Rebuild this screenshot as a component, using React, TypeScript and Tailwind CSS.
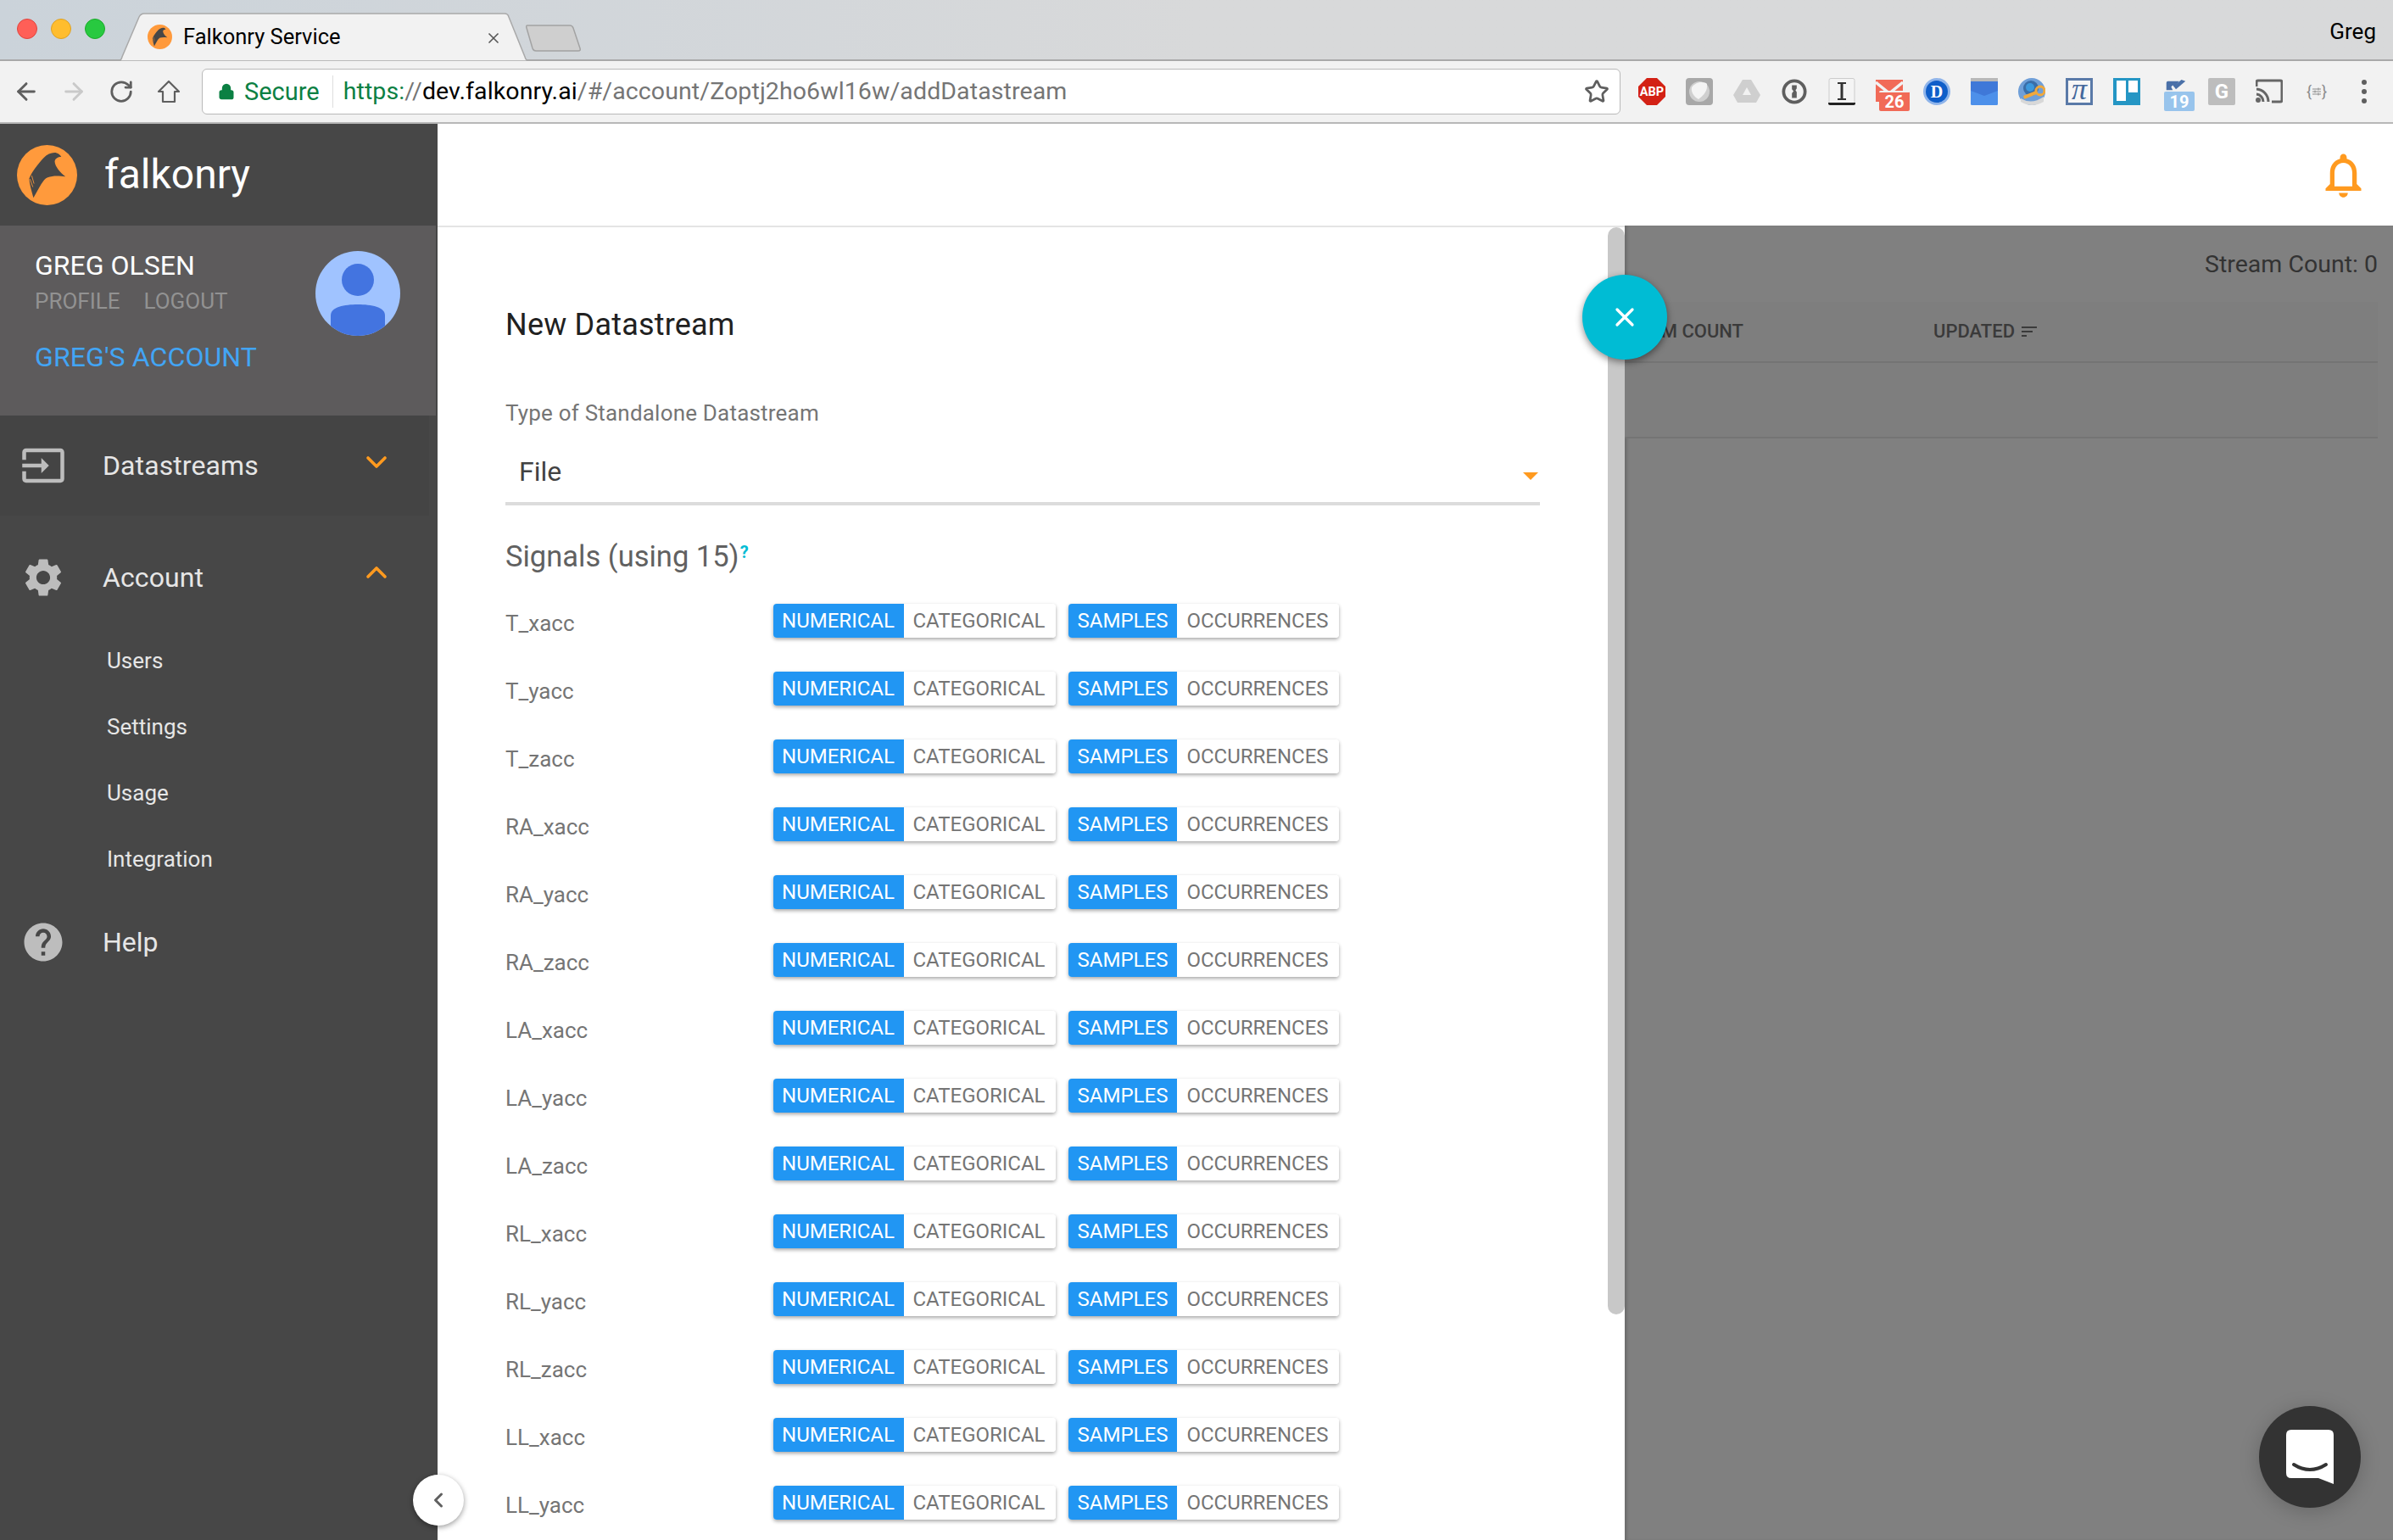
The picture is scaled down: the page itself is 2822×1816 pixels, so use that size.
import React from 'react';
import { ArrowLeft, ArrowRight, RotateCw, Star, X, ChevronDown, ChevronUp, ChevronLeft, Lock } from 'lucide-react';

const signals = [
  'T_xacc', 'T_yacc', 'T_zacc',
  'RA_xacc', 'RA_yacc', 'RA_zacc',
  'LA_xacc', 'LA_yacc', 'LA_zacc',
  'RL_xacc', 'RL_yacc', 'RL_zacc',
  'LL_xacc', 'LL_yacc',
];

const FalconLogo = ({ className }: { className: string }) => (
  <svg viewBox="32 32 212 212" className={className}>
    <circle cx="138" cy="138" r="106" fill="#ff9a3c" />
    <path
      d="M90 218 C84 195 76 172 75 150 C85 125 105 100 125 78 C140 62 160 56 172 60 C180 63 186 68 188 74 C176 74 166 80 165 90 C166 108 185 130 203 143 C185 141 160 138 140 146 C124 152 112 180 90 218 Z"
      fill="#474747"
    />
    <path d="M84 140 L92 168 M78 152 L88 180" stroke="#ff9a3c" strokeWidth="2.5" />
  </svg>
);

const Ext = ({ children }: { children: React.ReactNode }) => (
  <div className="flex h-[56px] w-[56px] shrink-0 items-center justify-center">{children}</div>
);

const numFont = { fontFamily: 'Roboto, sans-serif', fontWeight: 700 };

const ExtensionIcons = () => (
  <div className="ml-[9px] flex items-center">
    <Ext>
      <svg viewBox="0 0 32 32" className="h-[32px] w-[32px]">
        <polygon points="10,0 22,0 32,10 32,22 22,32 10,32 0,22 0,10" fill="#d32115" />
        <text x="16" y="21" textAnchor="middle" fontSize="14.5" fill="#fff" style={numFont}>ABP</text>
      </svg>
    </Ext>
    <Ext>
      <svg viewBox="0 0 32 32" className="h-[32px] w-[32px]">
        <rect width="32" height="32" rx="4" fill="#a8a8a8" />
        <circle cx="16" cy="16" r="12" fill="#cfcfcf" />
        <path d="M7 11 C12 4 22 4 25 7 C26 14 22 20 15 25 C9 22 6 16 7 11 Z" fill="#f4f4f4" />
      </svg>
    </Ext>
    <Ext>
      <svg viewBox="0 0 32 32" className="h-[32px] w-[32px]">
        <polygon points="11,2 21,2 32,20 27,29 5,29 0,20" fill="#cfcfcf" />
        <polygon points="16,11 11,20 21,20" fill="#f2f2f2" />
      </svg>
    </Ext>
    <Ext>
      <svg viewBox="0 0 32 32" className="h-[30px] w-[30px]">
        <circle cx="16" cy="16" r="13.5" fill="none" stroke="#5e5e5e" strokeWidth="4" />
        <path d="M13 8 H19 V12 L17.5 14.5 L19 16.5 V24 H13 V18 L15 15.5 L13 13 Z" fill="#5e5e5e" />
      </svg>
    </Ext>
    <Ext>
      <svg viewBox="0 0 32 32" className="h-[32px] w-[32px]">
        <rect x="1" y="0.5" width="30" height="31" rx="2" fill="#f4f4f4" stroke="#cccccc" />
        <path d="M0 29 H32 V30 Q32 32 30 32 H2 Q0 32 0 30 Z" fill="#222222" />
        <path d="M11 5 H21 V7 H17.5 V24 H21 V26 H11 V24 H14.5 V7 H11 Z" fill="#333333" />
      </svg>
    </Ext>
    <Ext>
      <div className="relative ml-[8px] h-[40px] w-[40px]">
        <svg viewBox="0 0 32 26" className="absolute left-0 top-[6px] h-[26px] w-[32px]">
          <rect width="32" height="26" fill="#f16a57" />
          <path d="M0 3 L16 16 L32 3" fill="none" stroke="#f2f2f2" strokeWidth="3.5" />
        </svg>
        <div className="absolute left-[4px] top-[19px] flex h-[24px] w-[36px] items-center justify-center rounded-[2px] border-t-2 border-[#f2f2f2] bg-[#f16a57] text-[20px] font-bold leading-none text-white">26</div>
      </div>
    </Ext>
    <Ext>
      <svg viewBox="0 0 32 32" className="h-[32px] w-[32px]">
        <circle cx="16" cy="16" r="16" fill="#8fb4ea" />
        <circle cx="16" cy="16" r="13" fill="#0f5ec9" />
        <text x="16" y="23" textAnchor="middle" fontSize="20" fill="#fff" style={{ fontFamily: 'Liberation Serif, serif', fontWeight: 700 }}>D</text>
      </svg>
    </Ext>
    <Ext>
      <svg viewBox="0 0 32 32" className="h-[32px] w-[32px]">
        <rect y="0" width="32" height="5" fill="#b8b8b8" />
        <rect y="4" width="32" height="28" rx="1.5" fill="#4d90ea" />
        <polygon points="0,4 32,4 32,15 16,21 0,15" fill="#3f78d8" />
      </svg>
    </Ext>
    <Ext>
      <svg viewBox="0 0 32 32" className="h-[32px] w-[32px]">
        <circle cx="16" cy="16" r="16" fill="#6f9fd8" />
        <circle cx="15" cy="12" r="9" fill="#3a6ea8" />
        <circle cx="14" cy="11" r="5" fill="#3c98dc" />
        <path d="M3 24 Q16 32 30 22 L30 28 Q16 36 3 28 Z" fill="#d8d8d8" />
        <rect x="6" y="18" width="16" height="4" rx="1" fill="#f0a83c" transform="rotate(-22 14 20)" />
        <circle cx="26" cy="15" r="5" fill="none" stroke="#f0a83c" strokeWidth="3" />
      </svg>
    </Ext>
    <Ext>
      <svg viewBox="0 0 32 32" className="h-[32px] w-[32px]">
        <rect x="1.5" y="1.5" width="29" height="29" fill="#f6f6f6" stroke="#5a7aa8" strokeWidth="3" />
        <text x="16" y="25" textAnchor="middle" fontSize="36" fill="#44689c" style={{ fontFamily: 'Liberation Serif, serif', fontStyle: 'italic' }}>π</text>
      </svg>
    </Ext>
    <Ext>
      <svg viewBox="0 0 32 32" className="h-[32px] w-[32px]">
        <rect width="32" height="32" fill="#2596c4" />
        <rect x="4" y="3" width="11" height="24" fill="#fff" />
        <rect x="18" y="3" width="11" height="14" fill="#fff" />
      </svg>
    </Ext>
    <Ext>
      <div className="relative h-[40px] w-[40px]">
        <svg viewBox="0 0 26 16" className="absolute left-[9px] top-[5px] h-[15px] w-[26px]">
          <path d="M1 5 Q1 3 3 3 H17 L11 10 L9 8 L7 10 L9 14 H1 Z" fill="#4a70a8" />
          <path d="M10 9 L20 1 L25 3 L13 13 Z" fill="#4a70a8" />
        </svg>
        <div className="absolute left-[8px] top-[20px] flex h-[23px] w-[36px] items-center justify-center rounded-[2px] bg-[#98c4ec] text-[20px] font-bold leading-none text-white">19</div>
      </div>
    </Ext>
    <Ext>
      <div className="flex h-[32px] w-[32px] items-center justify-center rounded-[2px] bg-[#bdbdbd] text-[24px] font-bold leading-none text-white">G</div>
    </Ext>
    <Ext>
      <svg viewBox="0 0 32 32" className="h-[32px] w-[32px]">
        <path d="M1 10 V5 Q1 3 3 3 H29 Q31 3 31 5 V26 Q31 28 29 28 H19" fill="none" stroke="#666" strokeWidth="3" />
        <path d="M1 13 A15 15 0 0 1 15 28 M1 19 A9 9 0 0 1 9 28" fill="none" stroke="#666" strokeWidth="3" />
        <circle cx="3" cy="26" r="3" fill="#666" />
      </svg>
    </Ext>
    <Ext>
      <div className="flex items-center text-[18px] leading-none text-[#8c8c8c]">
        {'{'}
        <svg viewBox="0 0 12 12" className="h-[12px] w-[12px]">
          <path d="M1 3 H11 M1 6 H11 M1 9 H11 M8 1.5 V4.5 M4 4.5 V7.5 M8 7.5 V10.5" stroke="#8c8c8c" strokeWidth="1" />
        </svg>
        {'}'}
      </div>
    </Ext>
    <Ext>
      <div className="flex flex-col gap-[5px]">
        <div className="h-[6px] w-[6px] rounded-full bg-[#5f5f5f]" />
        <div className="h-[6px] w-[6px] rounded-full bg-[#5f5f5f]" />
        <div className="h-[6px] w-[6px] rounded-full bg-[#5f5f5f]" />
      </div>
    </Ext>
  </div>
);

const BrowserChrome = () => (
  <div className="shrink-0 font-[Roboto,sans-serif]">
    <div className="flex h-[72px] items-end border-b-2 border-[#a9a9a9] bg-gradient-to-r from-[#cbd3da] via-[#d8d9da] to-[#d8d9da]">
      <div className="flex h-[71px] items-center gap-[16px] pl-[20px] pb-[2px]">
        <div className="h-[24px] w-[24px] rounded-full border border-[#e0443e] bg-[#ff5f57]" />
        <div className="h-[24px] w-[24px] rounded-full border border-[#dea123] bg-[#ffbd2e]" />
        <div className="h-[24px] w-[24px] rounded-full border border-[#1aab29] bg-[#28c940]" />
      </div>
      <div className="relative ml-[15px] mb-[-2px] flex h-[57px] w-[486px] items-center pl-[35px] pr-[20px]">
        <svg viewBox="0 0 486 57" className="absolute inset-0 h-full w-full">
          <path d="M0 57 L0 57 Q4 57 5 52 L25 5 Q27 1 31 1 L456 1 Q460 1 461 5 L480 52 Q481 57 486 57 Z" fill="#f2f2f2" stroke="#a9a9a9" strokeWidth="1.5" />
        </svg>
        <FalconLogo className="relative h-[29px] w-[29px]" />
        <span className="relative ml-[13px] text-[25.5px] leading-none text-black">Falkonry Service</span>
        <X className="absolute left-[433px] top-[20px] h-[20px] w-[20px] text-[#555]" strokeWidth={2} />
      </div>
      <svg viewBox="0 0 66 32" className="mb-[9px] ml-[-5px] h-[32px] w-[66px]">
        <path d="M2 1 H52 Q55 1 56 4 L64 28 Q65 31 62 31 H12 Q9 31 8 28 L1 4 Q0 1 2 1 Z" fill="#cfcfcf" stroke="#a3a3a3" strokeWidth="1.5" />
      </svg>
      <div className="flex-1" />
      <span className="mb-[20px] mr-[20px] text-[26px] leading-none text-black">Greg</span>
    </div>
    <div className="flex h-[74px] items-center border-b-2 border-[#b8b8b8] bg-[#f2f2f2] pl-[3px]">
      <div className="flex h-[56px] w-[56px] items-center justify-center text-[#5f5f5f]">
        <ArrowLeft className="h-[32px] w-[32px]" strokeWidth={2.2} />
      </div>
      <div className="flex h-[56px] w-[56px] items-center justify-center text-[#c9c9c9]">
        <ArrowRight className="h-[32px] w-[32px]" strokeWidth={2.2} />
      </div>
      <div className="flex h-[56px] w-[56px] items-center justify-center text-[#5f5f5f]">
        <RotateCw className="h-[30px] w-[30px]" strokeWidth={2.2} />
      </div>
      <div className="flex h-[56px] w-[56px] items-center justify-center">
        <svg viewBox="0 0 28 28" className="h-[28px] w-[28px]">
          <path d="M14 2 L26 14 H21 V26 H7 V14 H2 Z" fill="none" stroke="#5f5f5f" strokeWidth="2.2" strokeLinejoin="round" />
        </svg>
      </div>
      <div className="ml-[11px] flex h-[54px] w-[1673px] items-center rounded-[6px] border border-[#b9b9b9] bg-white pl-[18px] pr-[12px]">
        <Lock className="h-[20px] w-[20px] text-[#0b8043]" fill="#0b8043" strokeWidth={2.4} />
        <span className="ml-[11px] text-[29px] leading-none text-[#0b8043]">Secure</span>
        <div className="ml-[15px] h-[38px] w-px bg-[#dedede]" />
        <div className="ml-[12px] flex-1 text-[28.5px] leading-none tracking-[0.1px] text-[#757575]">
          <span className="text-[#0b8043]">https:</span>//<span className="text-black">dev.falkonry.ai</span>/#/account/Zoptj2ho6wl16w/addDatastream
        </div>
        <Star className="h-[30px] w-[30px] text-[#5f5f5f]" strokeWidth={2.2} />
      </div>
      <ExtensionIcons />
    </div>
  </div>
);

const Sidebar = () => (
  <div className="flex w-[516px] shrink-0 flex-col bg-[#474747] font-[Roboto,sans-serif]">
    <div className="flex h-[120px] shrink-0 items-center pl-[20px]">
      <FalconLogo className="h-[71px] w-[71px]" />
      <span className="ml-[32px] text-[48px] leading-none text-white">falkonry</span>
    </div>
    <div className="flex h-[224px] w-[514px] shrink-0 justify-between bg-[#5d5b5c] pl-[41px] pr-[42px]">
      <div className="pt-[28px]">
        <div className="text-[32px] leading-[38px] text-white">GREG OLSEN</div>
        <div className="mt-[7px] flex gap-[28px] text-[26px] leading-[32px] text-[#929292]">
          <span>PROFILE</span>
          <span>LOGOUT</span>
        </div>
        <div className="mt-[31px] text-[32px] leading-[38px] tracking-[0.1px] text-[#42a5f5]">GREG'S ACCOUNT</div>
      </div>
      <div className="mt-[30px] h-[100px] w-[100px] overflow-hidden rounded-full bg-[#a0c3ff]">
        <svg viewBox="0 0 100 100" className="h-full w-full">
          <ellipse cx="50" cy="34" rx="19" ry="19" fill="#4374e0" />
          <path d="M18 100 V76 C18 66 34 63 50 63 C66 63 82 66 82 76 V100 Z" fill="#4374e0" />
        </svg>
      </div>
    </div>
    <div className="flex h-[118px] w-[506px] shrink-0 items-center bg-[#444444] pl-[24px]">
      <svg viewBox="0 0 24 24" className="h-[54px] w-[54px]" fill="#bdbdbd">
        <path d="M21 3.01H3c-1.1 0-2 .9-2 2V9h2V4.99h18v14.03H3V15H1v4.01c0 1.1.9 1.98 2 1.98h18c1.1 0 2-.88 2-1.98v-14c0-1.11-.9-2-2-2zM11 16l4-4-4-4v3H1v2h10v3z" />
      </svg>
      <span className="ml-[43px] flex-1 text-[32px] leading-none tracking-[0.1px] text-[#e6e6e6]">Datastreams</span>
      <ChevronDown className="mb-[8px] mr-[42px] h-[40px] w-[40px] text-[#ff9a1f]" strokeWidth={2.2} />
    </div>
    <div className="mt-[38px] flex h-[70px] w-[506px] shrink-0 items-center pl-[24px]">
      <svg viewBox="0 0 24 24" className="h-[54px] w-[54px]" fill="#bdbdbd">
        <path d="M19.14 12.94c.04-.3.06-.61.06-.94 0-.32-.02-.64-.07-.94l2.03-1.58c.18-.14.23-.41.12-.61l-1.92-3.32c-.12-.22-.37-.29-.59-.22l-2.39.96c-.5-.38-1.03-.7-1.62-.94l-.36-2.54c-.04-.24-.24-.41-.48-.41h-3.84c-.24 0-.43.17-.47.41l-.36 2.54c-.59.24-1.13.57-1.62.94l-2.39-.96c-.22-.08-.47 0-.59.22L2.74 8.87c-.12.21-.08.47.12.61l2.03 1.58c-.05.3-.09.63-.09.94s.02.64.07.94l-2.03 1.58c-.18.14-.23.41-.12.61l1.92 3.32c.12.22.37.29.59.22l2.39-.96c.5.38 1.03.7 1.62.94l.36 2.54c.05.24.24.41.48.41h3.84c.24 0 .44-.17.47-.41l.36-2.54c.59-.24 1.13-.56 1.62-.94l2.39.96c.22.08.47 0 .59-.22l1.92-3.32c.12-.22.07-.47-.12-.61l-2.01-1.58zM12 15.6c-1.98 0-3.6-1.62-3.6-3.6s1.62-3.6 3.6-3.6 3.6 1.62 3.6 3.6-1.62 3.6-3.6 3.6z" />
      </svg>
      <span className="ml-[43px] flex-1 text-[32px] leading-none tracking-[0.1px] text-[#e6e6e6]">Account</span>
      <ChevronUp className="mb-[12px] mr-[42px] h-[40px] w-[40px] text-[#ff9a1f]" strokeWidth={2.2} />
    </div>
    <div className="mt-[24px] flex flex-col pl-[126px] text-[26px] leading-[78px] text-[#e6e6e6]">
      <div className="h-[78px]">Users</div>
      <div className="h-[78px]">Settings</div>
      <div className="h-[78px]">Usage</div>
      <div className="h-[78px]">Integration</div>
    </div>
    <div className="mt-[24px] flex h-[70px] items-center pl-[24px]">
      <svg viewBox="0 0 24 24" className="h-[54px] w-[54px]" fill="#bdbdbd">
        <path d="M12 2C6.48 2 2 6.48 2 12s4.48 10 10 10 10-4.48 10-10S17.52 2 12 2zm1 17h-2v-2h2v2zm2.07-7.75l-.9.92C13.45 12.9 13 13.5 13 15h-2v-.5c0-1.1.45-2.1 1.17-2.83l1.24-1.26c.37-.36.59-.86.59-1.41 0-1.1-.9-2-2-2s-2 .9-2 2H8c0-2.21 1.79-4 4-4s4 1.79 4 4c0 .88-.36 1.68-.93 2.25z" />
      </svg>
      <span className="ml-[43px] text-[32px] leading-none text-[#e6e6e6]">Help</span>
    </div>
  </div>
);

const SignalRow = ({ name }: { name: string }) => (
  <div className="flex h-[80px] shrink-0 items-start">
    <div className="w-[316px] text-[26px] leading-[46px] text-[#757575]">{name}</div>
    <div className="flex h-[40px] rounded-[4px] text-[24px] leading-[40px] shadow-[0_2px_4px_rgba(0,0,0,0.35)]">
      <div className="w-[154px] rounded-l-[4px] bg-[#2196f3] pr-[1px] text-center text-white">NUMERICAL</div>
      <div className="w-[179px] rounded-r-[4px] bg-white pr-[2px] text-center text-[#757575]">CATEGORICAL</div>
    </div>
    <div className="ml-[15px] flex h-[40px] rounded-[4px] text-[24px] leading-[40px] shadow-[0_2px_4px_rgba(0,0,0,0.35)]">
      <div className="w-[128px] rounded-l-[4px] bg-[#2196f3] text-center text-white">SAMPLES</div>
      <div className="w-[191px] rounded-r-[4px] bg-white pr-[1px] text-center text-[#757575]">OCCURRENCES</div>
    </div>
  </div>
);

const DatastreamForm = () => (
  <div className="flex h-full w-[1400px] shrink-0 overflow-hidden border-t-2 border-[#e4e4e4] bg-white">
    <div className="w-[1380px] shrink-0 pl-[80px] pr-[80px]">
      <div className="mt-[93px] text-[36px] leading-[44px] tracking-[0.2px] text-[#212121]">New Datastream</div>
      <div className="mt-[66px] text-[26px] leading-[32px] tracking-[0.2px] text-[#757575]">Type of Standalone Datastream</div>
      <div className="flex h-[93px] items-center justify-between border-b-4 border-[#dcdcdc] pl-[16px] pr-[2px] pt-[16px]">
        <span className="text-[32px] leading-none text-[#424242]">File</span>
        <div className="mt-[11px] h-0 w-0 border-x-[9px] border-t-[9px] border-x-transparent border-t-[#ff9a1f]" />
      </div>
      <div className="mt-[38px] h-[44px] text-[34.5px] leading-[44px] text-[#616161]">
        Signals (using 15)<sup className="ml-[1px] text-[20px] font-bold leading-none text-[#00bcd4]">?</sup>
      </div>
      <div className="mt-[34px] flex flex-col">
        {signals.map((name) => (
          <SignalRow key={name} name={name} />
        ))}
      </div>
    </div>
    <div className="h-[1282px] w-[20px] shrink-0 rounded-full bg-[#c8c8c8]" />
  </div>
);

const BackgroundPanel = () => (
  <div className="h-full flex-1 bg-[#808080] pr-[18px] text-[#333333] shadow-[inset_4px_0_4px_-2px_rgba(0,0,0,0.2)]">
    <div className="flex h-[90px] items-end justify-end pb-[30px] text-[28.5px] leading-none">Stream Count: 0</div>
    <div className="bg-[#7e7e7e]">
      <div className="flex h-[72px] items-center border-b-2 border-[#747474] text-[22px] font-medium leading-none text-[#3a3a3a]">
        <div className="flex w-[140px] shrink-0 justify-end overflow-hidden whitespace-nowrap">STREAM COUNT</div>
        <div className="ml-[224px] flex items-center">
          UPDATED
          <svg viewBox="0 0 18 12" className="ml-[8px] h-[12px] w-[18px]">
            <path d="M0 1 H18 M0 6 H13 M0 11 H6" stroke="#3a3a3a" strokeWidth="2" />
          </svg>
        </div>
      </div>
      <div className="h-[89px] border-b-2 border-[#747474]" />
    </div>
  </div>
);

export default function App() {
  return (
    <div className="flex h-[1816px] w-[2822px] flex-col overflow-hidden bg-white font-[Roboto,sans-serif]">
      <BrowserChrome />
      <div className="flex min-h-0 flex-1">
        <Sidebar />
        <div className="relative flex min-w-0 flex-1 flex-col">
          <div className="flex h-[120px] shrink-0 items-center justify-end bg-white pr-[27px]">
            <svg viewBox="0 0 24 24" className="h-[63px] w-[63px]" fill="#ff9a1f">
              <path d="M12 22c1.1 0 2-.9 2-2h-4c0 1.1.9 2 2 2zm6-6v-5c0-3.07-1.63-5.64-4.5-6.32V4c0-.83-.67-1.5-1.5-1.5s-1.5.67-1.5 1.5v.68C7.64 5.36 6 7.92 6 11v5l-2 2v1h16v-1l-2-2zm-2 1H8v-6c0-2.48 1.51-4.5 4-4.5s4 2.02 4 4.5v6z" />
            </svg>
          </div>
          <div className="flex min-h-0 flex-1">
            <DatastreamForm />
            <BackgroundPanel />
          </div>

          <div className="absolute left-[1350px] top-[178px] flex h-[100px] w-[100px] items-center justify-center rounded-full bg-[#00bcd4] shadow-[0_3px_8px_rgba(0,0,0,0.45)]">
            <X className="h-[36px] w-[36px] text-white" strokeWidth={2.2} />
          </div>
          <div className="absolute bottom-[17px] left-[-29px] flex h-[60px] w-[60px] items-center justify-center rounded-full bg-white shadow-[0_2px_6px_rgba(0,0,0,0.4)]">
            <ChevronLeft className="h-[28px] w-[28px] text-[#616161]" strokeWidth={2.6} />
          </div>
          <div className="absolute bottom-[38px] right-[38px] flex h-[120px] w-[120px] items-center justify-center rounded-full bg-[#333333] shadow-[0_4px_24px_rgba(0,0,0,0.2)]">
            <svg viewBox="0 0 56 64" className="h-[64px] w-[56px]">
              <path d="M6 0 H50 Q56 0 56 6 V64 L38 57 H6 Q0 57 0 51 V6 Q0 0 6 0 Z" fill="#fff" />
              <path d="M9 41 Q28 53 47 41" fill="none" stroke="#333" strokeWidth="4" strokeLinecap="round" />
            </svg>
          </div>
        </div>
      </div>
    </div>
  );
}
